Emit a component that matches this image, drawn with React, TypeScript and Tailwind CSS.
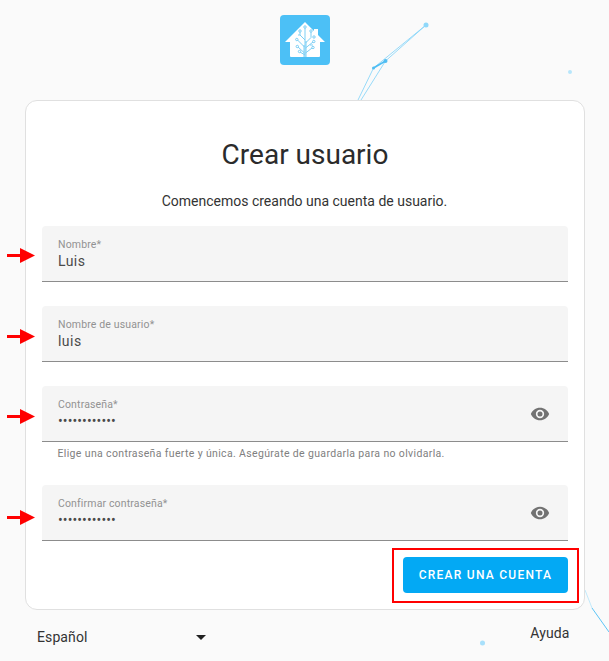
import React from "react";

const Eye = () => (
  <svg viewBox="0 0 24 24" className="w-5 h-5 fill-[#727272]">
    <path d="M12,9A3,3 0 0,0 9,12A3,3 0 0,0 12,15A3,3 0 0,0 15,12A3,3 0 0,0 12,9M12,17A5,5 0 0,1 7,12A5,5 0 0,1 12,7A5,5 0 0,1 17,12A5,5 0 0,1 12,17M12,4.5C7,4.5 2.73,7.61 1,12C2.73,16.39 7,19.5 12,19.5C17,19.5 21.27,16.39 23,12C21.27,7.61 17,4.5 12,4.5Z" />
  </svg>
);

const Arrow = ({ top }: { top: number }) => (
  <svg className="absolute left-[7px] w-[28px] h-[15px]" style={{ top }} viewBox="0 0 28 15">
    <rect x="0" y="6" width="14" height="3" fill="#ff0000" />
    <polygon points="13,0 28,7.5 13,15" fill="#ff0000" />
  </svg>
);

const Field = ({ label, value, dots, eye }: { label: string; value: string; dots?: boolean; eye?: boolean }) => (
  <div className="h-14 w-full bg-[#f5f5f5] rounded-t border-b border-[#8c8c8c] flex items-center pl-4 pr-[18px]">
    <div className="flex-1 min-w-0 h-full flex flex-col pt-3">
      <div className="text-[10.5px] leading-[14px] tracking-[0.15px] pl-[0.5px] text-[#929292]">{label}</div>
      <div
        className={
          dots
            ? "text-[14px] leading-[20px] -mt-[1px] tracking-[0.1px] pl-[0.5px] text-[#4a4a4a]"
            : "text-[14px] leading-[20px] -mt-[1px] tracking-[0.45px] pl-[0.5px] text-[#4a4a4a]"
        }
      >
        {value}
      </div>
    </div>
    {eye && <Eye />}
  </div>
);

const Logo = () => (
  <svg viewBox="0 0 50 50" className="w-[50px] h-[50px] block">
    <rect width="50" height="50" rx="4" fill="#4cc0f6" />
    <path d="M5 27 L25 7 L34 16 L34 14 L38 14 L38 20 L45 27 L40 27 L40 41 Q40 42 39 42 L11 42 Q10 42 10 41 L10 27 Z" fill="#fff" />
    <g fill="none" stroke="#7ccff5" strokeWidth="1">
      <path d="M25 42 L25 13 M24 42 L24 30 M26 42 L26 26 M25 25 L20 20 L20 17 M24.5 32 L17.5 25 M24.5 38 L18 32 M25 40 L20 37 M25.5 28 L31 22.5 L31 17 M25.5 33 L33 27 M25.5 38 L32 33 M30 30 L33 30 M18 20 L20 20" />
      <circle cx="25" cy="12" r="1.2" />
      <circle cx="20" cy="16" r="1.2" />
      <circle cx="31" cy="16" r="1.2" />
      <circle cx="16.8" cy="24.5" r="1.2" />
      <circle cx="17.3" cy="31.5" r="1.2" />
      <circle cx="19.5" cy="36.5" r="1.2" />
      <circle cx="33.8" cy="26.5" r="1.2" />
      <circle cx="33" cy="32.5" r="1.2" />
      <circle cx="34" cy="22" r="1.2" />
    </g>
  </svg>
);

export default function App() {
  return (
    <div
      className="relative w-[609px] h-[661px] overflow-hidden bg-[#fafafa] flex flex-col items-center text-[#212121]"
      style={{ fontFamily: "Roboto, 'Noto Sans', sans-serif" }}
    >
      <svg className="absolute inset-0 w-[609px] h-[661px]" viewBox="0 0 609 661">
        <g stroke="#7dd2f9" strokeWidth="0.8" fill="none">
          <path d="M426 25 L373.500 68 L358 100" />
          <path d="M426 25 L385.500 61 L361 100" />
          <path d="M373.500 68 L385.500 61" strokeWidth="1.6" stroke="#4dbdf4" />
          <path d="M585 590 L592 608" stroke="#b3e4fb" />
          <path d="M592 608 L609 632" strokeWidth="1" stroke="#5cc4f6" />
        </g>
        <circle cx="426" cy="25" r="2.5" fill="#8fd8fa" />
        <circle cx="385.500" cy="61" r="2" fill="#50bdf2" />
        <circle cx="373.500" cy="68" r="1.5" fill="#50bdf2" />
        <circle cx="570" cy="72" r="2" fill="#b7e6fb" />
        <circle cx="482.500" cy="643" r="2.500" fill="#a8e0fb" />
      </svg>

      <div className="relative mt-[15px] mb-[35px]">
        <Logo />
      </div>

      <div className="relative w-[560px] h-[510px] shrink-0 bg-white border border-[#e0e0e0] rounded-xl px-4 flex flex-col">
        <h1 className="text-center text-[28px] leading-[32px] font-normal mt-[38px] pl-[1px] text-[#2b2b2b]">Crear usuario</h1>
        <p className="text-center text-[14px] leading-5 mt-[20px] text-[#333333]">
          Comencemos creando una cuenta de usuario.
        </p>
        <div className="flex flex-col mt-[15px]">
          <Field label="Nombre*" value="Luis" />
          <div className="h-6" />
          <Field label="Nombre de usuario*" value="luis" />
          <div className="h-6" />
          <Field label="Contraseña*" value="••••••••••••" dots eye />
          <div className="h-[43px] pl-4 pt-[5px] text-[10.5px] leading-[14px] tracking-[0.35px] text-[#808080]">
            Elige una contraseña fuerte y única. Asegúrate de guardarla para no olvidarla.
          </div>
          <Field label="Confirmar contraseña*" value="••••••••••••" dots eye />
        </div>
        <div className="flex justify-end mt-4">
          <button className="w-[165px] h-9 pl-[1px] rounded bg-[#03a9f4] text-white text-[12px] font-medium tracking-[1.25px] uppercase">
            Crear una cuenta
          </button>
        </div>
      </div>

      <div className="relative w-[532px] flex justify-between mt-[14px] text-[14px] leading-5 tracking-[0.1px] text-[#333333]">
        <div className="flex items-center w-[167px] justify-between">
          <span className="mt-[3px] -ml-[1.5px]">Español</span>
          <span className="w-0 h-0 mt-[3px] border-x-[5px] border-x-transparent border-t-[5px] border-t-[#212121]" />
        </div>
        <span className="-mt-[1px] mr-[1px]">Ayuda</span>
      </div>

      <Arrow top={248} />
      <Arrow top={329} />
      <Arrow top={409} />
      <Arrow top={510} />
      <div className="absolute left-[392px] top-[548px] w-[187px] h-[55px] border-2 border-[#ff0000]" />
    </div>
  );
}
